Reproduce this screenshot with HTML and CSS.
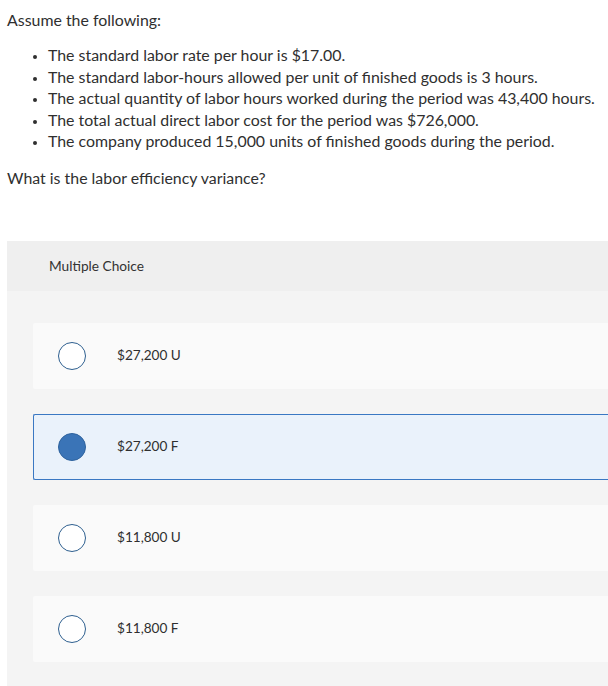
FILE: index.html
```html
<!DOCTYPE html>
<html>
<head>
<meta charset="utf-8">
<link rel="stylesheet" href="styles.css">
</head>
<body>
<div class="page">
  <p class="intro">Assume the following:</p>
  <ul class="facts">
    <li>The standard labor rate per hour is $17.00.</li>
    <li>The standard labor-hours allowed per unit of finished goods is 3 hours.</li>
    <li>The actual quantity of labor hours worked during the period was 43,400 hours.</li>
    <li>The total actual direct labor cost for the period was $726,000.</li>
    <li>The company produced 15,000 units of finished goods during the period.</li>
  </ul>
  <p class="question">What is the labor efficiency variance?</p>

  <div class="panel">
    <div class="panel-head">Multiple Choice</div>
    <div class="options">
      <div class="option"><span class="radio"></span><span class="label">$27,200 U</span></div>
      <div class="option selected"><span class="radio"></span><span class="label">$27,200 F</span></div>
      <div class="option"><span class="radio"></span><span class="label">$11,800 U</span></div>
      <div class="option"><span class="radio"></span><span class="label">$11,800 F</span></div>
    </div>
  </div>
</div>
</body>
</html>
```

FILE: styles.css
```css
html, body {
  margin: 0;
  padding: 0;
  background: #ffffff;
}
body {
  font-family: "Lato", "Open Sans", sans-serif;
  color: #2f2f2f;
  font-size: 15.9px;
  line-height: 21.4px;
  overflow: hidden;
}
.page {
  padding: 9px 0 0 7px;
}
.intro {
  margin: 0 0 14px 0;
}
.facts {
  margin: 0;
  padding-left: 41px;
}
.facts li {
  margin: 0;
}
.facts li::marker {
  font-size: 12px;
}
.question {
  margin: 16px 0 0 0;
}
.panel {
  margin-top: 52px;
  margin-right: -20px;
  background: #f4f4f4;
  padding-bottom: 40px;
}
.panel-head {
  background: #efefef;
  height: 50px;
  display: flex;
  align-items: center;
  padding-left: 42px;
  font-size: 13.7px;
  color: #333;
}
.options {
  padding: 32px 0 0 26px;
  display: flex;
  flex-direction: column;
  gap: 25px;
}
.option {
  height: 66px;
  background: #fafafa;
  display: flex;
  align-items: center;
  border: 1px solid transparent;
  border-right: none;
  border-radius: 2px;
  box-sizing: border-box;
  font-size: 13.6px;
  color: #2f2f2f;
}
.option.selected {
  background: #eaf2fb;
  border-color: #3a78c3;
}
.radio {
  width: 28px;
  height: 28px;
  border: 1.5px solid #2e5f8f;
  border-radius: 50%;
  margin-left: 24px;
  box-sizing: border-box;
  background: #ffffff;
  flex: none;
}
.option.selected .radio {
  background: #3a74b7;
  border-color: #2f639e;
}
.label {
  margin-left: 31px;
}
```
